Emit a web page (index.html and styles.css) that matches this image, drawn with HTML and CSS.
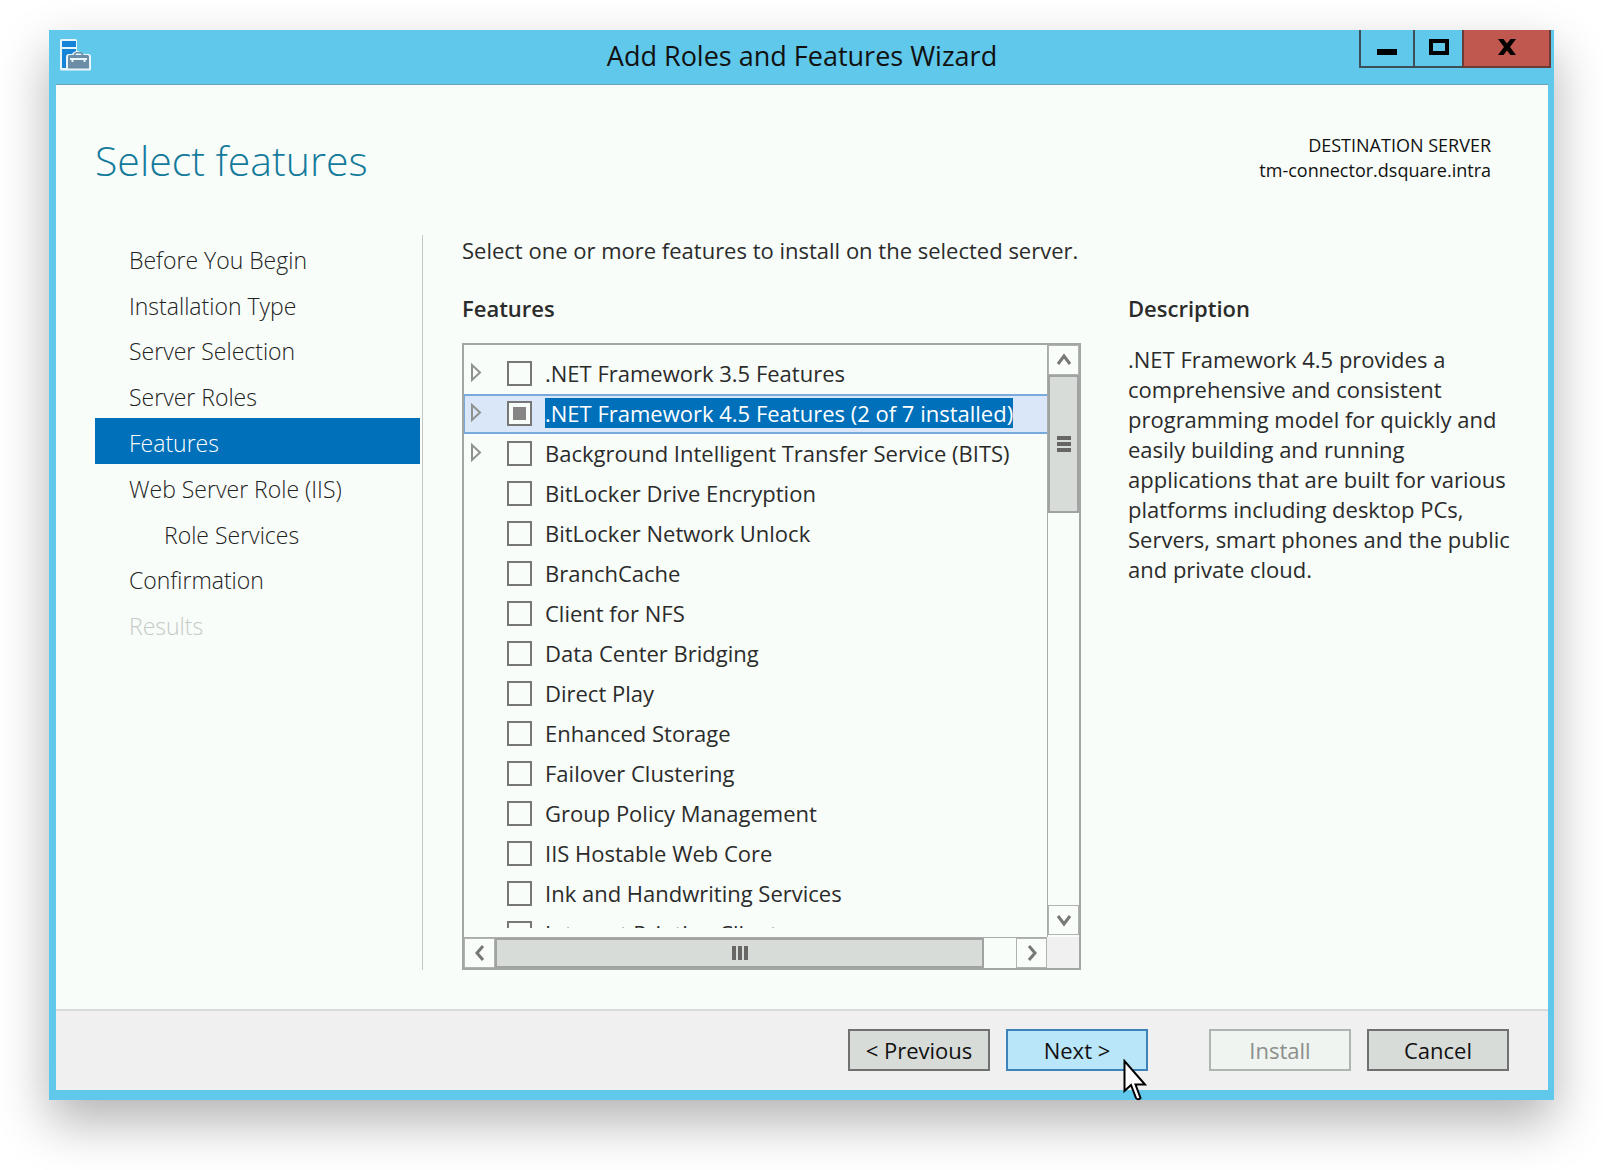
FILE: index.html
```html
<!DOCTYPE html>
<html lang="en">
<head>
<meta charset="utf-8">
<title>Add Roles and Features Wizard</title>
<link rel="stylesheet" href="styles.css">
</head>
<body>
<div class="window">
  <header class="titlebar">
    <svg class="app-icon" viewBox="0 0 32 32" aria-hidden="true">
      <path d="M1.500 0h14q1.500 0 1.500 1.500v10.500q3 0 5 3h6.500q2.500 0 2.500 2.500v12.500q0 1.500-1.500 1.500h-28q-1.500 0-1.500-1.500v-28.500q0-1.500 1.500-1.500z" fill="#eaf5fa"/>
      <path d="M2 2h14v6h-14zM2 10h14v2q-3 1-4 3h-3q-3 0-3 3v11h-4z" fill="#1583d8"/>
      <path fill-rule="evenodd" d="M8 17.500q0-1.500 1.500-1.500h4q1-3 3-3h4q2 0 3 3h4q1.500 0 1.500 1.500v12h-21zM15 16h7l-1.500-1.500h-4z" fill="#6b8ea6"/>
      <path d="M10 20h17M12.500 20v3M24.500 20v3" stroke="#eaf5fa" stroke-width="2" fill="none"/>
    </svg>
    <span class="title">Add Roles and Features Wizard</span>
    <div class="window-controls">
      <button class="control control-min" aria-label="Minimize"><svg width="20" height="16" viewBox="0 0 20 16"><path d="M0 10h20v6h-20z"/></svg></button>
      <button class="control control-max" aria-label="Maximize"><svg width="20" height="16" viewBox="0 0 20 16"><path fill-rule="evenodd" d="M0 0h20v16h-20zM4 4v8h12v-8z"/></svg></button>
      <button class="control control-close" aria-label="Close"><svg width="20" height="16" viewBox="0 0 20 16"><path d="M1 0h5.500l3.500 4.500 3.500-4.500h5.500l-6 8 6 8h-5.500l-3.500-4.500-3.500 4.500h-5.500l6-8z"/></svg></button>
    </div>
  </header>
  <div class="client">
    <div class="heading">
      <h1>Select features</h1>
      <p class="destination">DESTINATION SERVER<br>tm-connector.dsquare.intra</p>
    </div>
    <div class="content">
      <nav class="steps">
        <ol>
          <li><a href="#">Before You Begin</a></li>
          <li><a href="#">Installation Type</a></li>
          <li><a href="#">Server Selection</a></li>
          <li><a href="#">Server Roles</a></li>
          <li><a href="#" class="current" aria-current="step">Features</a></li>
          <li><a href="#">Web Server Role (IIS)</a></li>
          <li><a href="#" class="nested">Role Services</a></li>
          <li><a href="#">Confirmation</a></li>
          <li><a class="disabled">Results</a></li>
        </ol>
      </nav>
      <main class="page">
        <p class="intro">Select one or more features to install on the selected server.</p>
        <section class="features">
          <h2>Features</h2>
          <div class="listbox">
            <div class="viewport">
              <ul>
                <li><svg class="expander" viewBox="0 0 12 20"><path d="M2 2v15l8-7.500z"/></svg><label><input type="checkbox"><span>.NET Framework 3.5 Features</span></label></li>
                <li class="selected"><svg class="expander" viewBox="0 0 12 20"><path d="M2 2v15l8-7.500z"/></svg><label><input type="checkbox" class="partial"><span>.NET Framework 4.5 Features (2 of 7 installed)</span></label></li>
                <li><svg class="expander" viewBox="0 0 12 20"><path d="M2 2v15l8-7.500z"/></svg><label><input type="checkbox"><span>Background Intelligent Transfer Service (BITS)</span></label></li>
                <li><label><input type="checkbox"><span>BitLocker Drive Encryption</span></label></li>
                <li><label><input type="checkbox"><span>BitLocker Network Unlock</span></label></li>
                <li><label><input type="checkbox"><span>BranchCache</span></label></li>
                <li><label><input type="checkbox"><span>Client for NFS</span></label></li>
                <li><label><input type="checkbox"><span>Data Center Bridging</span></label></li>
                <li><label><input type="checkbox"><span>Direct Play</span></label></li>
                <li><label><input type="checkbox"><span>Enhanced Storage</span></label></li>
                <li><label><input type="checkbox"><span>Failover Clustering</span></label></li>
                <li><label><input type="checkbox"><span>Group Policy Management</span></label></li>
                <li><label><input type="checkbox"><span>IIS Hostable Web Core</span></label></li>
                <li><label><input type="checkbox"><span>Ink and Handwriting Services</span></label></li>
                <li><label><input type="checkbox"><span>Internet Printing Client</span></label></li>
              </ul>
            </div>
            <div class="scrollbar vertical">
              <button class="arrow" aria-label="Scroll up"><svg width="16" height="16" viewBox="0 0 16 16"><path d="M2 12l6-8 6 8"/></svg></button>
              <div class="thumb"><i></i><i></i><i></i></div>
              <button class="arrow" aria-label="Scroll down"><svg width="16" height="16" viewBox="0 0 16 16"><path d="M2 4l6 8 6-8"/></svg></button>
            </div>
            <div class="scrollbar horizontal">
              <button class="arrow" aria-label="Scroll left"><svg width="16" height="16" viewBox="0 0 16 16"><path d="M11 1l-6 7 6 7"/></svg></button>
              <div class="thumb"><i></i><i></i><i></i></div>
              <button class="arrow" aria-label="Scroll right"><svg width="16" height="16" viewBox="0 0 16 16"><path d="M5 1l6 7-6 7"/></svg></button>
            </div>
            <div class="corner"></div>
          </div>
        </section>
        <section class="description">
          <h2>Description</h2>
          <p>.NET Framework 4.5 provides a<br>comprehensive and consistent<br>programming model for quickly and<br>easily building and running<br>applications that are built for various<br>platforms including desktop PCs,<br>Servers, smart phones and the public<br>and private cloud.</p>
        </section>
      </main>
    </div>
    <footer class="actions">
      <button class="btn">&lt; Previous</button>
      <button class="btn btn-default">Next &gt;<svg class="cursor" viewBox="0 0 24 42" aria-hidden="true"><path d="M1.500 2v30l6.500-6 5 13q2 2.500 4.500 0l-5-13.500h9.500z"/></svg></button>
      <button class="btn btn-install" disabled>Install</button>
      <button class="btn">Cancel</button>
    </footer>
  </div>
</div>
</body>
</html>
```
FILE: styles.css
```css
* { box-sizing: border-box; }

body {
  margin: 0;
  padding: 30px 49px 70px 49px;
  background: #fff;
  color: #2b2b2b;
  font-family: "Open Sans", "Noto Sans", sans-serif;
  font-size: 22px;
}

h1, h2, p, ol, ul { margin: 0; padding: 0; }
ol, ul { list-style: none; }
button { font: inherit; color: inherit; margin: 0; padding: 0; }

.window {
  background: #60c8ea;
  padding: 0 6px 10px 7px;
  box-shadow: 0 22px 48px rgba(0, 0, 0, 0.3);
}

/* Title bar */
.titlebar {
  display: grid;
  grid-template-columns: 1fr auto 1fr;
  height: 54px;
}
.app-icon { width: 32px; height: 32px; margin: 9px 0 0 4px; }
.title {
  padding-top: 8px;
  color: #111;
  font-size: 27px;
  line-height: 36px;
}
.window-controls { display: flex; justify-self: end; margin-right: -3px; }
.control {
  display: flex;
  align-items: center;
  justify-content: center;
  height: 38px;
  padding-bottom: 2px;
  background: transparent;
  border: 2px solid #3c4f57;
  border-width: 0 0 2px 2px;
}
.control-min { width: 54px; }
.control-max { width: 49px; }
.control-close { width: 89px; background: #c1584f; border-color: #6e3a38; border-right-width: 2px; }

/* Client area */
.client {
  background: #f8fdf9;
  border-top: 1px solid #6d9fb8;
}
.heading {
  display: flex;
  justify-content: space-between;
  height: 150px;
  padding: 45px 57px 0 39px;
}
h1 {
  color: #147a9c;
  font-size: 41px;
  font-weight: 300;
  line-height: 60px;
}
.destination {
  color: #111;
  font-size: 18px;
  line-height: 25px;
  padding-top: 3px;
  text-align: right;
}
.content { display: flex; padding: 0 39px 39px 39px; }

.steps {
  width: 328px;
  flex: none;
  padding-right: 2px;
  border-right: 1px solid #c4c8c5;
}
.steps ol { display: grid; grid-auto-rows: 1fr; height: 412px; }
.steps a {
  display: flex;
  align-items: center;
  height: 100%;
  padding: 4px 0 0 34px;
  color: #222;
  font-size: 23px;
  font-weight: 300;
  text-decoration: none;
}
.steps .nested { padding-left: 69px; }
.steps .current { background: #0070ba; color: #fff; }
.steps .disabled { color: #c6cac7; }

.page {
  flex: 1;
  display: grid;
  grid-template-columns: 619px 1fr;
  grid-template-rows: 30px auto;
  gap: 27px 47px;
  padding-left: 39px;
}
.intro { grid-column: 1 / -1; line-height: 30px; }
h2 { font-size: 22px; font-weight: 600; line-height: 32px; }
.description p { line-height: 30px; padding-top: 20px; white-space: nowrap; }

/* Feature list */
.listbox {
  display: grid;
  grid-template-columns: 1fr 32px;
  grid-template-rows: 592px 31px;
  margin-top: 19px;
  border: 2px solid #a3a6a4;
}
.viewport { padding-top: 9px; }
.viewport ul { height: 574px; overflow: hidden; }
.viewport li {
  position: relative;
  display: flex;
  align-items: center;
  height: 40px;
  padding: 0 0 2px 42px;
  border: 2px solid transparent;
  border-right: 0;
  border-left-width: 1px;
}
.viewport .selected { background: #dae7f8; border-color: #78aade; }
.expander {
  position: absolute;
  left: 5px;
  width: 12px;
  height: 20px;
  fill: none;
  stroke: #8f9290;
  stroke-width: 2;
}
.viewport label { display: flex; align-items: center; gap: 13px; white-space: nowrap; line-height: 30px; }
.viewport input {
  appearance: none;
  width: 25px;
  height: 25px;
  margin: 0;
  border: 2px solid #777;
  background: #f9fdfa;
}
.viewport .partial { background: linear-gradient(#858585, #858585) center / 13px 13px no-repeat #f9fdfa; }
.selected span { background: #0070ba; color: #fff; }

/* Scroll bars */
.scrollbar { display: flex; }
.vertical { flex-direction: column; border-left: 1px solid #a9acaa; padding-bottom: 2px; }
.horizontal { border-top: 1px solid #a9acaa; }
.arrow {
  display: flex;
  align-items: center;
  justify-content: center;
  width: 31px;
  height: 30px;
  flex: none;
  background: #f8fdf9;
  border: 1px solid #b0b3b1;
}
.arrow:last-child { margin-left: auto; }
.vertical .arrow:last-child { margin: auto 0 0; }
.arrow svg { fill: none; stroke: #777; stroke-width: 3; }
.thumb {
  display: flex;
  align-items: center;
  justify-content: center;
  gap: 2px;
  background: #d8dcd9;
  border: 2px solid #a0a3a1;
}
.thumb i { background: #666; }
.vertical .thumb { flex-direction: column; height: 138px; }
.vertical .thumb i { width: 14px; height: 4px; }
.horizontal .thumb { width: 489px; }
.horizontal .thumb i { width: 4px; height: 14px; }
.corner { background: #f0f0f0; }

/* Footer */
.actions {
  display: flex;
  justify-content: flex-end;
  gap: 16px;
  height: 81px;
  padding: 18px 39px 0;
  background: #f0f0f0;
  border-top: 2px solid #d9dbda;
}
.btn {
  position: relative;
  width: 142px;
  height: 42px;
  background: #d8dcd9;
  border: 2px solid #707070;
  color: #111;
}
.btn-default { background: #b9e6f9; border-color: #3d82b9; }
.btn-install { margin-left: 45px; background: #eff4f0; border-color: #aeb4b0; color: #8b8f8c; }
.cursor {
  position: absolute;
  left: 115px;
  top: 28px;
  width: 24px;
  height: 42px;
  fill: #fff;
  stroke: #000;
  stroke-width: 2;
}
```
